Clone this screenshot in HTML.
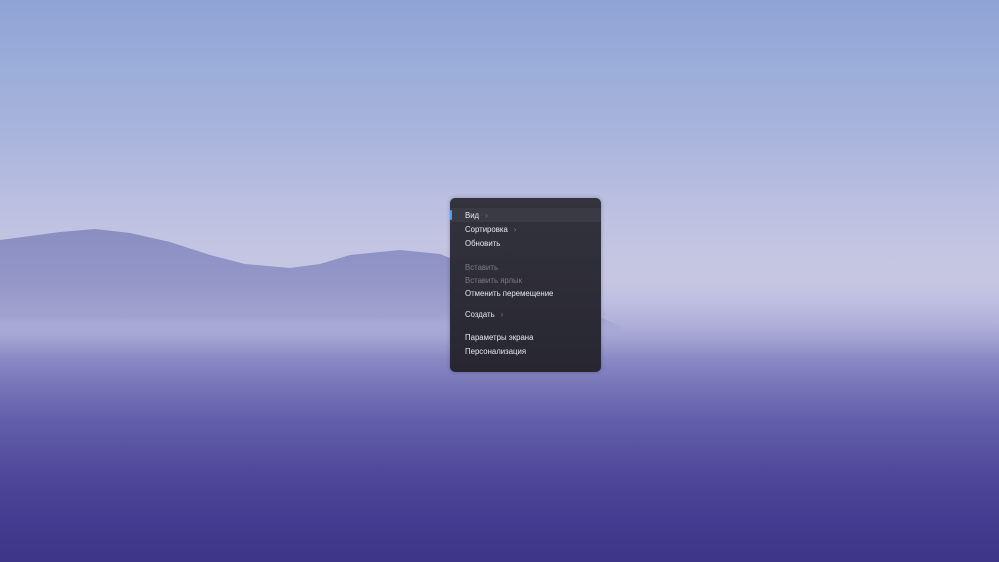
<!DOCTYPE html>
<html><head><style>
html,body{margin:0;padding:0;width:999px;height:562px;overflow:hidden;font-family:"Liberation Sans",sans-serif}
#bg{position:absolute;left:0;top:0;width:999px;height:562px;background:linear-gradient(180deg,#8fa3d5 0%,#9badd9 12%,#abb5dc 25%,#bbbfe0 36%,#c4c5e2 44%,#c6c6e2 50%,#bdbde0 54%,#afaed8 58%,#9e9dcf 61%,#8a88c4 64%,#7673b6 69%,#635eaa 75%,#524b9c 83%,#453e91 91%,#3d3587 100%)}
#menu{position:absolute;left:450px;top:198px;width:151px;height:174px;border-radius:5px;background:linear-gradient(180deg,#33333d,#272631);box-shadow:0 0 4px rgba(0,0,0,.25)}
.it{position:absolute;left:15px;font-size:7.8px;color:#e8e8ee;line-height:10px;white-space:nowrap}
.dis{color:#7b7a86}
.ar{color:#77767f;margin-left:6px;font-size:8px}
#hl{position:absolute;left:0;top:10px;width:151px;height:14px;background:#3a3a44}
#acc{position:absolute;left:0;top:12px;width:2px;height:10px;background:#4aa0ff;border-radius:1px}
</style></head><body>
<div id="bg"></div>
<svg width="999" height="562" style="position:absolute;left:0;top:0">
<defs><linearGradient id="h" x1="0" y1="0" x2="0" y2="1"><stop offset="0" stop-color="#8a8ec2"/><stop offset="0.5" stop-color="#9597c8"/><stop offset="0.8" stop-color="#a2a3d0"/><stop offset="1" stop-color="#a8a8d4" stop-opacity="0"/></linearGradient></defs>
<path d="M0 240 L30 236 L60 232 L95 229 L130 233 L170 242 L210 255 L245 264 L290 268 L320 264 L350 255 L400 250 L440 254 L480 270 L560 300 L620 326 L620 340 L0 340 Z" fill="url(#h)"/>
</svg>
<div id="menu">
<div id="hl"></div><div id="acc"></div>
<div class="it" style="top:13px">Вид<span class="ar">›</span></div>
<div class="it" style="top:27px">Сортировка<span class="ar">›</span></div>
<div class="it" style="top:41px">Обновить</div>
<div class="it dis" style="top:65px">Вставить</div>
<div class="it dis" style="top:78px">Вставить ярлык</div>
<div class="it" style="top:91px">Отменить перемещение</div>
<div class="it" style="top:112px">Создать<span class="ar">›</span></div>
<div class="it" style="top:135px">Параметры экрана</div>
<div class="it" style="top:149px">Персонализация</div>
</div>
</body></html>
